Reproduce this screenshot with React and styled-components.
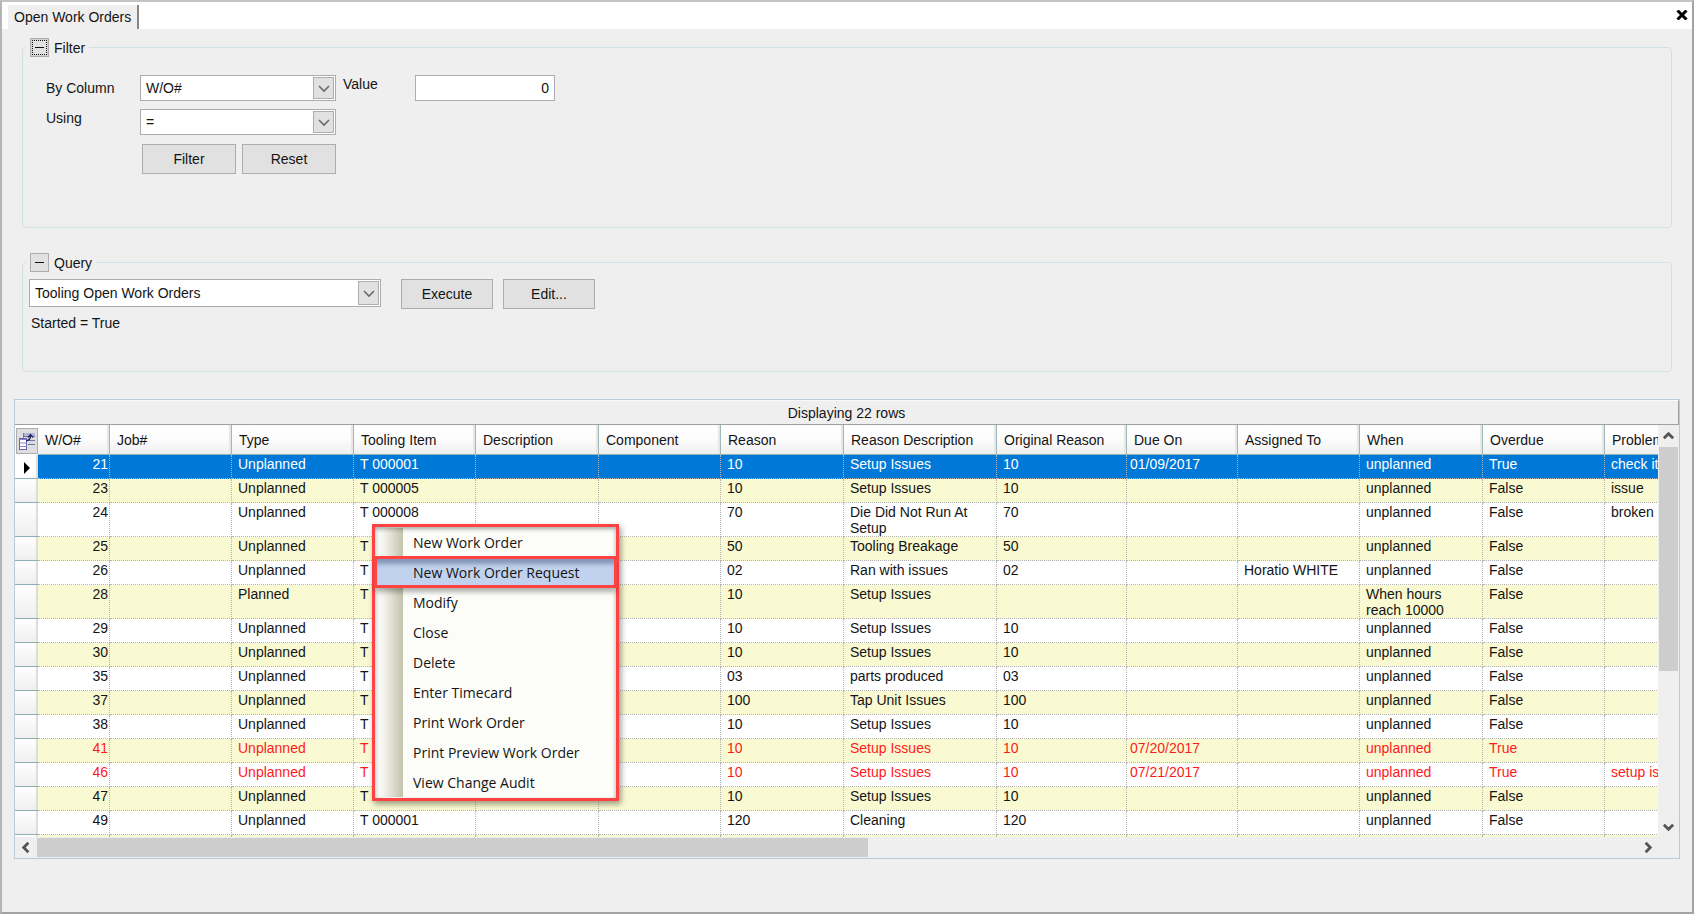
import React from "react";
import styled, { createGlobalStyle, css } from "styled-components";

const GlobalStyle = createGlobalStyle`
  *, *::before, *::after { box-sizing: border-box; }
  body { margin: 0; background: #efefef; }
  body, button, input, select {
    font-family: "Liberation Sans", Arial, sans-serif;
    font-size: 14px;
    line-height: 16px;
    color: #141414;
  }
`;

const Window = styled.div`
  height: 100vh;
  min-height: 720px;
  display: flex;
  flex-direction: column;
  border: 2px solid #a3a3a3;
  border-top-color: #c3c3bf;
  border-left-color: #b5b5b5;
  background: #efefef;
`;

const TabStrip = styled.header`
  display: flex;
  align-items: flex-end;
  justify-content: space-between;
  height: 27px;
  padding: 0 2px 0 6px;
  background: #fff;
`;

const Tab = styled.button`
  height: 24px;
  padding: 0 6px 1px 6px;
  border: 0;
  border-right: 2px solid #868686;
  background: #efefef;
  white-space: nowrap;
`;

const CloseButton = styled.button`
  display: flex;
  align-items: center;
  justify-content: center;
  width: 16px;
  height: 27px;
  padding: 0 0 2px;
  border: 0;
  background: none;
`;

const Content = styled.main`
  flex: 1;
  min-height: 0;
  display: flex;
  flex-direction: column;
  padding: 9px 12px 53px 12px;
`;

const Group = styled.fieldset`
  min-width: 0;
  margin: 0 8px;
  padding: 0;
  border: 1px solid #d3dfe6;
  border-radius: 4px;
`;

const Legend = styled.legend`
  display: flex;
  align-items: center;
  gap: 5px;
  height: 19px;
  margin-left: 3px;
  padding: 0 4px;
`;

const CollapseButton = styled.button`
  display: flex;
  align-items: center;
  justify-content: center;
  width: 19px;
  height: 19px;
  padding: 0;
  border: 1px solid #adadad;
  background: ${(p) => (p.$focused ? "#d2d2d2" : "#e1e1e1")};
`;

const FocusDots = styled.span`
  display: flex;
  align-items: center;
  justify-content: center;
  width: 15px;
  height: 15px;
  border: 1px dotted ${(p) => (p.$focused ? "#111" : "transparent")};
  background: #e1e1e1;
`;

const FilterForm = styled.div`
  display: grid;
  grid-template-columns: 94px 196px 79px 140px;
  row-gap: 8px;
  padding: 18px 0 53px 23px;
`;

const FieldLabel = styled.label`
  align-self: ${(p) => (p.$raised ? "start" : "center")};
  padding-left: ${(p) => (p.$inset ? 7 : 0)}px;
  line-height: 18px;
  white-space: nowrap;
`;

const SelectBox = styled.div`
  position: relative;
  width: ${(p) => p.$width};
  height: ${(p) => p.$height}px;
`;

const Select = styled.select`
  appearance: none;
  width: 100%;
  height: 100%;
  padding: 0 28px 0 5px;
  border: 1px solid #abadb3;
  outline: 0;
  border-radius: 0;
  background: #fff;
`;

const SelectArrow = styled.span`
  position: absolute;
  top: 2px;
  right: 2px;
  bottom: 2px;
  width: 21px;
  display: flex;
  align-items: center;
  justify-content: center;
  border: 1px solid #adadad;
  background: #e1e1e1;
  pointer-events: none;
`;

const NumberInput = styled.input`
  width: 100%;
  height: 26px;
  padding: 0 5px;
  border: 1px solid #abadb3;
  background: #fff;
  text-align: right;
`;

const ButtonRow = styled.div`
  grid-column: 2;
  display: flex;
  gap: 6px;
  padding: 1px 0 0 2px;
`;

const PushButton = styled.button`
  width: ${(p) => p.$width}px;
  height: 30px;
  padding: 0;
  border: 1px solid #adadad;
  background: #e1e1e1;
`;

const QueryForm = styled.div`
  padding: 7px 0 40px 6px;
`;

const QueryRow = styled.div`
  display: flex;
  align-items: flex-start;
  gap: 10px;
`;

const QueryPicker = styled.div`
  width: 362px;
`;

const QueryText = styled.p`
  margin: 6px 0 0 2px;
`;

const Stack = styled.div`
  display: flex;
  flex-direction: column;
  gap: 25px;
  margin-bottom: 27px;
`;

const GridPanel = styled.section`
  position: relative;
  flex: 1;
  min-height: 0;
  display: flex;
  flex-direction: column;
  border: 1px solid #b9c9dc;
`;

const GridTitle = styled.div`
  height: 25px;
  padding: 4px 0;
  border-right: 1px solid #a0a0a0;
  border-bottom: 1px solid #a0a0a0;
  border-top: 1px solid #f9f9f9;
  text-align: center;
`;

const GridBody = styled.div`
  flex: 1;
  min-height: 0;
  display: grid;
  grid-template-columns: minmax(0, 1fr) 21px;
`;

const Viewport = styled.div`
  overflow: hidden;
  min-height: 0;
  background: #fff;
`;

const Table = styled.table`
  width: 1712px;
  table-layout: fixed;
  border-collapse: separate;
  border-spacing: 0;
`;

const HeadCell = styled.th`
  height: 30px;
  padding: 1px 0 0 7px;
  border-right: 1px solid #9fb9b9;
  border-bottom: 1px solid #8fb0b4;
  background: linear-gradient(#fff, #fcfcfc 50%, #efefef);
  box-shadow: inset -2px 0 1px #e6e6e6;
  font-weight: normal;
  text-align: left;
  white-space: nowrap;
`;

const CornerCell = styled.th`
  padding: 2px 0 1px 1px;
  background: #fff;
`;

const FieldChooser = styled.button`
  display: flex;
  align-items: center;
  justify-content: center;
  width: 22px;
  height: 26px;
  padding: 0;
  border: 1px solid #adadad;
  background: #dedede;
`;

const Row = styled.tr`
  height: 24px;
  color: ${(p) => (p.$selected ? "#fff" : p.$late ? "#ff1a1a" : "inherit")};
  background: ${(p) => (p.$selected ? "#0078d7" : p.$shaded ? "#fafad2" : "#fff")};
`;

const Cell = styled.td`
  padding: ${(p) => (p.$align === "right" ? "1px 1px 0 0" : p.$tight ? "1px 0 0 3px" : "1px 0 0 6px")};
  border-right: 1px dotted #b4b4b4;
  border-bottom: 1px dotted #b4b4b4;
  vertical-align: top;
  text-align: ${(p) => p.$align || "left"};
  white-space: pre-line;
`;

const RowSelector = styled.td`
  padding: 0;
  border-bottom: 1px solid #8fb0b4;
  background: linear-gradient(#fff, #efefef);
  box-shadow: inset -2px 0 1px #dcdcdc;
  text-align: center;
  vertical-align: middle;
  ${(p) => p.$current && css`background: #fff;`}

  svg { display: block; margin: 2px auto 0; }
`;

const ScrollBar = styled.div`
  display: flex;
  flex-direction: ${(p) => (p.$vertical ? "column" : "row")};
  background: #efefef;
  padding: ${(p) => (p.$vertical ? "0 1px" : "1px 21px 1px 0")};
  ${(p) => !p.$vertical && css`height: 21px;`}
`;

const ScrollArrow = styled.button`
  flex: none;
  display: flex;
  align-items: center;
  justify-content: center;
  width: ${(p) => (p.$vertical ? "auto" : "22px")};
  height: ${(p) => (p.$vertical ? "22px" : "auto")};
  padding: 0;
  border: 0;
  background: #efefef;
`;

const ScrollTrack = styled.div`
  flex: 1;
  min-width: 0;
  min-height: 0;
`;

const ScrollThumb = styled.div`
  background: #cdcdcd;
  width: ${(p) => (p.$vertical ? "100%" : p.$size)};
  height: ${(p) => (p.$vertical ? p.$size : "100%")};
`;

const ContextMenu = styled.menu`
  position: absolute;
  top: 124px;
  left: 357px;
  width: 247px;
  margin: 0;
  padding: 0 0 1px;
  list-style: none;
  border: 3px solid #ff4242;
  background: linear-gradient(90deg, #fcfcfa, #f4f4f0 30%, #e3e3d8 55%, #c2c2ac) 0 1px / 28px calc(100% - 2px) no-repeat #fcfcf9;
  box-shadow: 2px 3px 6px rgba(0, 0, 0, 0.4), inset 0 2px 4px rgba(0, 0, 0, 0.35);
`;

const MenuItem = styled.button`
  display: block;
  width: 100%;
  height: 30px;
  padding: 1px 0 0 38px;
  border: 0;
  background: none;
  font-family: "Open Sans", "Noto Sans", sans-serif;
  font-size: 14px;
  text-align: left;
  white-space: nowrap;
  ${(p) =>
    p.$active &&
    css`
      position: relative;
      outline: 3px solid #ff4242;
      outline-offset: -2px;
      background: #c1d2ee;
      box-shadow: 0 5px 5px rgba(0, 0, 0, 0.3), inset 0 7px 4px rgba(60, 80, 120, 0.45);
    `}
`;

const CHEVRONS = {
  up: "M2 9 L7 4 L12 9",
  down: "M2 5 L7 10 L12 5",
  left: "M9 2 L4 7 L9 12",
  right: "M5 2 L10 7 L5 12",
};

const Chevron = ({ dir, bold }) => (
  <svg width={bold ? 13 : 14} height={bold ? 13 : 14} viewBox="0 0 14 14" aria-hidden="true">
    <path d={CHEVRONS[dir]} fill="none" stroke={bold ? "#555" : "#6a6a6a"} strokeWidth={bold ? 3 : 1.6} />
  </svg>
);

const FieldChooserIcon = () => (
  <svg width="18" height="20" viewBox="0 0 18 20" aria-hidden="true">
    <rect x="5" y="2" width="12" height="3" fill="#b4b4de" />
    <path d="M5.500 2V8M5 5.500H17M9 9.500H17M10 13.500H17" fill="none" stroke="#7070b4" />
    <rect x="1.500" y="7.500" width="7" height="11" fill="#fff" stroke="#6464ae" />
    <path d="M1 8.500H9M1 12H9M1 15.500H9" stroke="#8484c4" />
    <path d="M8 9.500C11 9.500 12.500 8.500 12.500 4.500M10 6.500L12.500 3.500L15 6.500" fill="none" stroke="#2c2c60" strokeWidth="1.400" />
  </svg>
);

const Dropdown = ({ id, value, width, height }) => (
  <SelectBox $width={width} $height={height}>
    <Select id={id} defaultValue={value} aria-label={id === "query" ? "Query" : undefined}>
      <option>{value}</option>
    </Select>
    <SelectArrow>
      <Chevron dir="down" />
    </SelectArrow>
  </SelectBox>
);

const Collapse = ({ focused, label }) => (
  <CollapseButton type="button" $focused={focused} aria-label={`Collapse ${label}`}>
    <FocusDots $focused={focused}>
      <svg width="9" height="1" viewBox="0 0 9 1" aria-hidden="true">
        <rect width="9" height="1" fill="#111" />
      </svg>
    </FocusDots>
  </CollapseButton>
);

const COLUMNS = [
  { key: "wo", title: "W/O#", width: 72, align: "right" },
  { key: "job", title: "Job#", width: 122 },
  { key: "type", title: "Type", width: 122 },
  { key: "item", title: "Tooling Item", width: 122 },
  { key: "description", title: "Description", width: 123 },
  { key: "component", title: "Component", width: 122 },
  { key: "reason", title: "Reason", width: 123 },
  { key: "reasonText", title: "Reason Description", width: 153 },
  { key: "original", title: "Original Reason", width: 130 },
  { key: "due", title: "Due On", width: 111, tight: true },
  { key: "assigned", title: "Assigned To", width: 122 },
  { key: "when", title: "When", width: 123 },
  { key: "overdue", title: "Overdue", width: 122 },
  { key: "problem", title: "Problem", width: 122 },
];

const order = (wo, item, reason, reasonText, extra) => ({
  wo,
  type: "Unplanned",
  item,
  reason,
  reasonText,
  original: reason,
  when: "unplanned",
  overdue: "False",
  ...extra,
});

const ORDERS = [
  order(21, "T 000001", "10", "Setup Issues", { due: "01/09/2017", overdue: "True", problem: "check it", selected: true }),
  order(23, "T 000005", "10", "Setup Issues", { problem: "issue" }),
  order(24, "T 000008", "70", "Die Did Not Run At\nSetup", { problem: "broken" }),
  order(25, "T", "50", "Tooling Breakage"),
  order(26, "T", "02", "Ran with issues", { assigned: "Horatio WHITE" }),
  order(28, "T", "10", "Setup Issues", { type: "Planned", original: "", when: "When hours\nreach 10000" }),
  order(29, "T", "10", "Setup Issues"),
  order(30, "T", "10", "Setup Issues"),
  order(35, "T", "03", "parts produced"),
  order(37, "T", "100", "Tap Unit Issues"),
  order(38, "T", "10", "Setup Issues"),
  order(41, "T", "10", "Setup Issues", { due: "07/20/2017", overdue: "True", late: true }),
  order(46, "T", "10", "Setup Issues", { due: "07/21/2017", overdue: "True", problem: "setup issue", late: true }),
  order(47, "T", "10", "Setup Issues"),
  order(49, "T 000001", "120", "Cleaning"),
  { wo: "" },
];

const MENU = [
  "New Work Order",
  "New Work Order Request",
  "Modify",
  "Close",
  "Delete",
  "Enter Timecard",
  "Print Work Order",
  "Print Preview Work Order",
  "View Change Audit",
];

const OrdersTable = () => (
  <Table>
    <colgroup>
      <col width={23} />
      {COLUMNS.map((c) => (
        <col key={c.key} width={c.width} />
      ))}
    </colgroup>
    <thead>
      <tr>
        <CornerCell>
          <FieldChooser type="button" aria-label="Choose columns">
            <FieldChooserIcon />
          </FieldChooser>
        </CornerCell>
        {COLUMNS.map((c) => (
          <HeadCell key={c.key} scope="col">
            {c.title}
          </HeadCell>
        ))}
      </tr>
    </thead>
    <tbody>
      {ORDERS.map((o, i) => (
        <Row key={i} $selected={o.selected} $late={o.late} $shaded={i % 2 === 1}>
          <RowSelector $current={o.selected}>
            {o.selected && (
              <svg width="6" height="12" viewBox="0 0 6 12" aria-hidden="true">
                <path d="M0 0L6 6L0 12Z" fill="#000" />
              </svg>
            )}
          </RowSelector>
          {COLUMNS.map((c) => (
            <Cell key={c.key} $align={c.align} $tight={c.tight}>
              {o[c.key]}
            </Cell>
          ))}
        </Row>
      ))}
    </tbody>
  </Table>
);

export default function App() {
  return (
    <>
      <GlobalStyle />
      <Window>
        <TabStrip>
          <Tab type="button">Open Work Orders</Tab>
          <CloseButton type="button" aria-label="Close">
            <svg width="12" height="10" viewBox="0 0 12 10" aria-hidden="true">
              <path d="M1.500 0.500L10.500 9.500M10.500 0.500L1.500 9.500" stroke="#000" strokeWidth="3" />
            </svg>
          </CloseButton>
        </TabStrip>
        <Content>
          <Stack>
            <Group>
              <Legend>
                <Collapse label="Filter" focused />
                Filter
              </Legend>
              <FilterForm>
                <FieldLabel htmlFor="column">By Column</FieldLabel>
                <Dropdown id="column" value="W/O#" width="100%" height={26} />
                <FieldLabel htmlFor="value" $raised $inset>
                  Value
                </FieldLabel>
                <NumberInput id="value" type="text" defaultValue="0" />
                <FieldLabel htmlFor="operator" $raised>
                  Using
                </FieldLabel>
                <Dropdown id="operator" value="=" width="100%" height={26} />
                <ButtonRow>
                  <PushButton type="button" $width={94}>
                    Filter
                  </PushButton>
                  <PushButton type="button" $width={94}>
                    Reset
                  </PushButton>
                </ButtonRow>
              </FilterForm>
            </Group>
            <Group>
              <Legend>
                <Collapse label="Query" />
                Query
              </Legend>
              <QueryForm>
                <QueryRow>
                  <QueryPicker>
                    <Dropdown id="query" value="Tooling Open Work Orders" width="352px" height={28} />
                  </QueryPicker>
                  <PushButton type="button" $width={92}>
                    Execute
                  </PushButton>
                  <PushButton type="button" $width={92}>
                    Edit...
                  </PushButton>
                </QueryRow>
                <QueryText>Started = True</QueryText>
              </QueryForm>
            </Group>
          </Stack>
          <GridPanel>
            <GridTitle>Displaying 22 rows</GridTitle>
            <GridBody>
              <Viewport>
                <OrdersTable />
              </Viewport>
              <ScrollBar $vertical>
                <ScrollArrow type="button" $vertical aria-label="Scroll up">
                  <Chevron dir="up" bold />
                </ScrollArrow>
                <ScrollTrack>
                  <ScrollThumb $vertical $size="61%" />
                </ScrollTrack>
                <ScrollArrow type="button" $vertical aria-label="Scroll down">
                  <Chevron dir="down" bold />
                </ScrollArrow>
              </ScrollBar>
            </GridBody>
            <ScrollBar>
              <ScrollArrow type="button" aria-label="Scroll left">
                <Chevron dir="left" bold />
              </ScrollArrow>
              <ScrollTrack>
                <ScrollThumb $size="52%" />
              </ScrollTrack>
              <ScrollArrow type="button" aria-label="Scroll right">
                <Chevron dir="right" bold />
              </ScrollArrow>
            </ScrollBar>
            <ContextMenu>
              {MENU.map((label, i) => (
                <li key={label}>
                  <MenuItem type="button" $active={i === 1}>
                    {label}
                  </MenuItem>
                </li>
              ))}
            </ContextMenu>
          </GridPanel>
        </Content>
      </Window>
    </>
  );
}
